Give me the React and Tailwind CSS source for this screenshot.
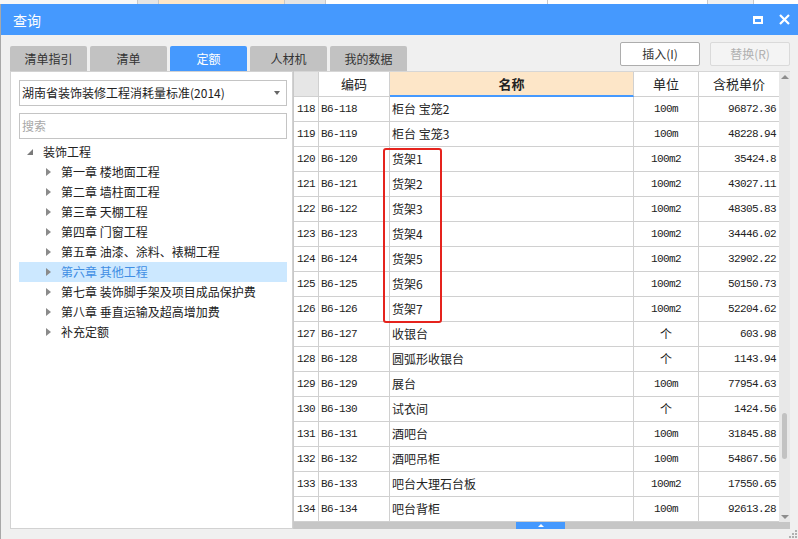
import React from 'react'

const rows = [
  ['118', 'B6-118', '柜台 宝笼2', '100m', '96872.36'],
  ['119', 'B6-119', '柜台 宝笼3', '100m', '48228.94'],
  ['120', 'B6-120', '货架1', '100m2', '35424.8'],
  ['121', 'B6-121', '货架2', '100m2', '43027.11'],
  ['122', 'B6-122', '货架3', '100m2', '48305.83'],
  ['123', 'B6-123', '货架4', '100m2', '34446.02'],
  ['124', 'B6-124', '货架5', '100m2', '32902.22'],
  ['125', 'B6-125', '货架6', '100m2', '50150.73'],
  ['126', 'B6-126', '货架7', '100m2', '52204.62'],
  ['127', 'B6-127', '收银台', '个', '603.98'],
  ['128', 'B6-128', '圆弧形收银台', '个', '1143.94'],
  ['129', 'B6-129', '展台', '100m', '77954.63'],
  ['130', 'B6-130', '试衣间', '个', '1424.56'],
  ['131', 'B6-131', '酒吧台', '100m', '31845.88'],
  ['132', 'B6-132', '酒吧吊柜', '100m', '54867.56'],
  ['133', 'B6-133', '吧台大理石台板', '100m2', '17550.65'],
  ['134', 'B6-134', '吧台背柜', '100m', '92613.28'],
  ['', '', '', '', ''],
]

const chapters = [
  '第一章 楼地面工程',
  '第二章 墙柱面工程',
  '第三章 天棚工程',
  '第四章 门窗工程',
  '第五章 油漆、涂料、裱糊工程',
  '第六章 其他工程',
  '第七章 装饰脚手架及项目成品保护费',
  '第八章 垂直运输及超高增加费',
  '补充定额',
]

const tabs = ['清单指引', '清单', '定额', '人材机', '我的数据']

const cjk = "font-['Microsoft_YaHei','Noto_Sans_CJK_SC',sans-serif]"
const mono = "font-['Liberation_Mono','Noto_Sans_CJK_SC',monospace] text-[11px] tracking-[-0.6px]"

const Arrow = () => (
  <svg width="5" height="8" viewBox="0 0 5 8" className="shrink-0">
    <path d="M0 0 L5 4 L0 8 Z" fill="#8a8a8a" />
  </svg>
)

export default function App() {
  return (
    <div className={`w-[798px] h-[539px] flex flex-col overflow-hidden bg-[#f0f0f0] text-[#222] ${cjk}`}>
      {/* app strip behind the dialog */}
      <div className="h-[4px] flex shrink-0">
        <div className="w-[137px] bg-[#f7f7f7]" />
        <div className="w-[21px] bg-[#e4e4e4] border-l border-[#c8c8c8]" />
        <div className="w-[126px] bg-[#fde6c8] border-l border-[#c8c8c8]" />
        <div className="w-[41px] bg-[#e4e4e4] border-l border-[#c8c8c8]" />
        <div className="w-[222px] bg-white border-l border-[#c8c8c8]" />
        <div className="w-[160px] bg-white border-l border-[#c8c8c8]" />
        <div className="w-[46px] bg-[#f0f0f0] border-l border-[#c8c8c8]" />
        <div className="flex-1 bg-white border-l border-[#c8c8c8]" />
      </div>

      <div className="flex-1 flex flex-col border-l border-[#a8a8a8]">
        {/* title bar */}
        <div className="h-[31px] shrink-0 bg-[#4599fe] flex items-center pl-[12px] pr-[8px] text-white">
          <span className="text-[14px] leading-none">查询</span>
          <div className="ml-auto flex items-center gap-[16px]">
            <div className="w-[10px] h-[8px] border-[2px] border-t-[3px] border-white" />
            <svg width="11" height="11" viewBox="0 0 11 11">
              <path d="M1 1 L10 10 M10 1 L1 10" stroke="white" strokeWidth="2.2" />
            </svg>
          </div>
        </div>

        <div className="flex-1 flex flex-col pl-[9px] pr-[8px]">
          {/* tab row */}
          <div className="h-[36px] shrink-0 flex items-end">
            <div className="flex gap-[3px]">
              {tabs.map((t) => (
                <div
                  key={t}
                  className={`w-[77px] h-[25px] rounded-t-[2px] flex items-center justify-center text-[12px] ${
                    t === '定额' ? 'bg-[#4599fe] text-white' : 'bg-[#c2c2c2] text-[#333]'
                  }`}
                >
                  {t}
                </div>
              ))}
            </div>
            <div className="ml-auto flex gap-[10px] mb-[5px]">
              <div className="w-[80px] h-[24px] bg-white border border-[#adadad] rounded-[2px] flex items-center justify-center text-[12px] text-[#333]">
                插入(I)
              </div>
              <div className="w-[80px] h-[24px] bg-[#f4f4f4] border border-[#dadada] rounded-[2px] flex items-center justify-center text-[12px] text-[#b0b0b0]">
                替换(R)
              </div>
            </div>
          </div>

          {/* main */}
          <div className="h-[458px] flex">
            {/* left panel */}
            <div className="w-[283px] shrink-0 bg-white border border-[#d2d2d2] pl-[8px] pr-[5px] pt-[8px]">
              <div className="h-[26px] border border-[#c4c4c4] flex items-center pl-[2px] pr-[6px] text-[12px]">
                <span>湖南省装饰装修工程消耗量标准(2014)</span>
                <span className="ml-auto w-0 h-0 border-l-[3px] border-r-[3px] border-t-[4px] border-l-transparent border-r-transparent border-t-[#666]" />
              </div>
              <div className="h-[26px] mt-[7px] border border-[#c4c4c4] flex items-center pl-[2px] text-[12px] text-[#a8a8a8]">
                搜索
              </div>
              <div className="mt-[3px] text-[12px]">
                <div className="h-[20px] flex items-center pl-[8px] gap-[10px]">
                  <svg width="6" height="6" viewBox="0 0 6 6">
                    <path d="M6 0 L6 6 L0 6 Z" fill="#7a7a7a" />
                  </svg>
                  <span>装饰工程</span>
                </div>
                {chapters.map((c) => (
                  <div
                    key={c}
                    className={`h-[20px] flex items-center pl-[27px] gap-[10px] ${
                      c === '第六章 其他工程' ? 'bg-[#cce8ff] text-[#3f8ee4]' : ''
                    }`}
                  >
                    <Arrow />
                    <span className="whitespace-pre">{c}</span>
                  </div>
                ))}
              </div>
            </div>

            {/* table */}
            <div className="flex-1 flex flex-col bg-white border-l border-[#c8c8c8] min-w-0">
              <div className="flex-1 flex min-h-0">
                <div className="relative w-[485px] flex flex-col overflow-hidden border-t border-[#d6d6d6]">
                  <div className="h-[25px] shrink-0 flex text-[13px] border-b border-[#d0d0d0]">
                    <div className="w-[25px] bg-[#e6e6e6] border-r border-[#d0d0d0]" />
                    <div className="w-[71px] flex items-center justify-center border-r border-[#d0d0d0]">编码</div>
                    <div className="w-[244px] flex items-center justify-center font-bold bg-[#fde6c8] border-r border-[#d0d0d0] border-b-[2px] border-b-[#4599fe] -mb-[1px]">名称</div>
                    <div className="w-[65px] flex items-center justify-center border-r border-[#d0d0d0]">单位</div>
                    <div className="w-[80px] flex items-center justify-center">含税单价</div>
                  </div>
                  {rows.map((r, i) => (
                    <div key={i} className="h-[25px] shrink-0 flex border-b border-[#d0d0d0]">
                      <div className={`w-[25px] pl-[3px] flex items-center border-r border-[#d0d0d0] ${mono}`}>{r[0]}</div>
                      <div className={`w-[71px] pl-[2px] flex items-center border-r border-[#d0d0d0] ${mono}`}>{r[1]}</div>
                      <div className="w-[244px] pl-[2px] flex items-center border-r border-[#d0d0d0] text-[12px] whitespace-pre">{r[2]}</div>
                      <div className={`w-[65px] flex items-center justify-center border-r border-[#d0d0d0] ${mono}`}>
                        {r[3] === '个' ? <span className={`text-[12px] tracking-normal ${cjk}`}>个</span> : r[3]}
                      </div>
                      <div className={`w-[80px] pr-[3px] flex items-center justify-end ${mono}`}>{r[4]}</div>
                    </div>
                  ))}
                  {/* red highlight box */}
                  <div className="absolute left-[89px] top-[76px] w-[59px] h-[175px] border-[2px] border-[#e5231d] rounded-[3px]" />
                </div>
                {/* vertical scrollbar */}
                <div className="w-[11px] bg-[#e8e8e8] flex flex-col items-center border-t border-[#d6d6d6] pt-[3px] pb-[3px]">
                  <span className="w-0 h-0 border-l-[4px] border-r-[4px] border-b-[4px] border-l-transparent border-r-transparent border-b-[#8c8c8c]" />
                  <div className="mt-[334px] w-[5px] h-[46px] rounded-[3px] bg-[#c2c2c2]" />
                  <span className="mt-auto w-0 h-0 border-l-[4px] border-r-[4px] border-t-[4px] border-l-transparent border-r-transparent border-t-[#8c8c8c]" />
                </div>
              </div>
              {/* horizontal scrollbar */}
              <div className="h-[7px] shrink-0 bg-[#c6c6c6] flex justify-start pl-[222px]">
                <div className="w-[49px] h-full bg-[#4599fe] flex items-center justify-center">
                  <span className="w-0 h-0 border-l-[3px] border-r-[3px] border-b-[3px] border-l-transparent border-r-transparent border-b-white" />
                </div>
              </div>
            </div>
          </div>

          {/* bottom margin with resize grip */}
          <div className="flex-1 flex justify-end items-end pb-[1px] -mr-[7px]">
            <svg width="8" height="8" viewBox="0 0 8 8">
              <rect x="6" y="0" width="2" height="2" fill="#b0b0b0" />
              <rect x="3" y="3" width="2" height="2" fill="#b0b0b0" />
              <rect x="6" y="3" width="2" height="2" fill="#b0b0b0" />
              <rect x="0" y="6" width="2" height="2" fill="#b0b0b0" />
              <rect x="3" y="6" width="2" height="2" fill="#b0b0b0" />
              <rect x="6" y="6" width="2" height="2" fill="#b0b0b0" />
            </svg>
          </div>
        </div>
      </div>
    </div>
  )
}
